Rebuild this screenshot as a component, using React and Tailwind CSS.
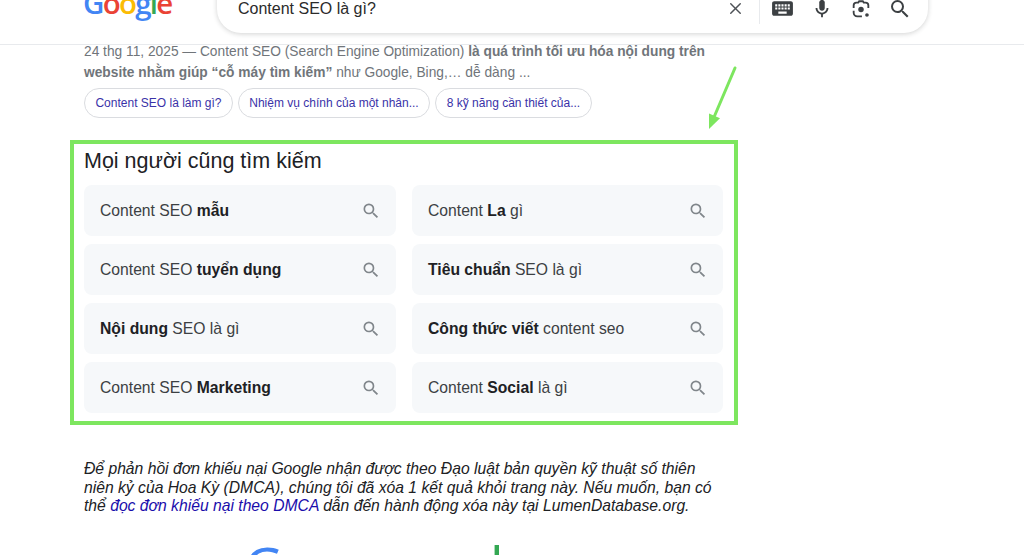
import React from "react";
import { X } from "lucide-react";

const font = "[font-family:'Liberation_Sans',Arial,sans-serif]";

const chips = [
  { label: "Content SEO là làm gì?", width: "w-[149px]" },
  { label: "Nhiệm vụ chính của một nhân...", width: "w-[192px]" },
  { label: "8 kỹ năng cần thiết của...", width: "w-[157px]" },
];

const related = [
  [["Content SEO ", false], ["mẫu", true]],
  [["Content ", false], ["La", true], [" gì", false]],
  [["Content SEO ", false], ["tuyển dụng", true]],
  [["Tiêu chuẩn", true], [" SEO là gì", false]],
  [["Nội dung", true], [" SEO là gì", false]],
  [["Công thức viết", true], [" content seo", false]],
  [["Content SEO ", false], ["Marketing", true]],
  [["Content ", false], ["Social", true], [" là gì", false]],
];

const searchPath =
  "M15.5 14h-.79l-.28-.27A6.471 6.471 0 0 0 16 9.5 6.5 6.5 0 1 0 9.5 16c1.61 0 3.09-.59 4.23-1.57l.27.28v.79l5 4.99L20.49 19l-4.99-5zm-6 0C7.01 14 5 11.99 5 9.5S7.01 5 9.5 5 14 7.01 14 9.5 11.99 14 9.5 14z";

const GoogleWord = ({ className }) => (
  <div className={`font-['Open_Sans',sans-serif] ${className}`}>
    <span className="text-[#4285f4]">G</span>
    <span className="text-[#ea4335]">o</span>
    <span className="text-[#fbbc05]">o</span>
    <span className="text-[#4285f4]">g</span>
    <span className="text-[#34a853]">l</span>
    <span className="text-[#ea4335]">e</span>
  </div>
);

const Header = () => (
  <div className="h-[45px] border-b border-[#e8eaed] flex items-start overflow-hidden">
    <div className="w-[217px] pl-[83px] -mt-[21px]">
      <GoogleWord className="text-[29.5px] leading-[48px] font-semibold tracking-[-0.06em]" />
    </div>
    <div className="w-[711px] h-[49px] -mt-[16px] rounded-b-[24px] bg-white shadow-[0_1px_5px_rgba(32,33,36,0.2)] flex items-center pl-[21px] pr-[16px]">
      <span className="text-[16px] text-[#2b2b2b] flex-1">Content SEO là gì?</span>
      <X className="w-[19px] h-[19px] text-[#4d5156]" strokeWidth={1.8} />
      <div className="w-px h-[33px] bg-[#e8eaed] ml-[14px] mr-[10px] self-start mt-[7px]" />
      {/* keyboard */}
      <svg viewBox="0 0 24 24" className="w-[25px] h-[25px] fill-[#3c4043]">
        <path d="M20 5H4c-1.1 0-1.99.9-1.99 2L2 17c0 1.1.9 2 2 2h16c1.1 0 2-.9 2-2V7c0-1.1-.9-2-2-2zm-9 3h2v2h-2V8zm0 3h2v2h-2v-2zM8 8h2v2H8V8zm0 3h2v2H8v-2zm-1 2H5v-2h2v2zm0-3H5V8h2v2zm9 7H8v-2h8v2zm0-4h-2v-2h2v2zm0-3h-2V8h2v2zm3 3h-2v-2h2v2zm0-3h-2V8h2v2z" />
      </svg>
      {/* mic */}
      <svg viewBox="0 0 24 24" className="w-[22px] h-[22px] ml-[16px] fill-[#3c4043]">
        <path d="M12 14c1.66 0 3-1.34 3-3V5c0-1.66-1.34-3-3-3S9 3.34 9 5v6c0 1.66 1.34 3 3 3z" />
        <path d="M17 11c0 2.76-2.24 5-5 5s-5-2.24-5-5H5c0 3.53 2.61 6.43 6 6.92V21h2v-3.08c3.39-.49 6-3.39 6-6.92h-2z" />
      </svg>
      {/* lens */}
      <svg viewBox="0 0 24 24" className="w-[22px] h-[22px] ml-[17px]" fill="none">
        <path d="M4 11V8a3 3 0 0 1 3-3h2l1-1.5h4L15 5h2a3 3 0 0 1 3 3v3M4 14v2a4 4 0 0 0 4 4h5" stroke="#3c4043" strokeWidth="2" />
        <circle cx="12" cy="12.5" r="3" fill="#3c4043" />
        <circle cx="18.5" cy="18.5" r="2" fill="#3c4043" />
      </svg>
      <svg viewBox="0 0 24 24" className="w-[24px] h-[24px] ml-[16px] fill-[#3c4043]">
        <path d={searchPath} />
      </svg>
    </div>
  </div>
);

export default function App() {
  return (
    <div className={`relative w-[1024px] h-[555px] overflow-hidden bg-white ${font}`}>
      <Header />

      <div className="pl-[84px] -mt-[4px]">
        <p className="w-[640px] text-[13.75px] leading-[21px] text-[#70757a]">
          24 thg 11, 2025 — Content SEO (Search Engine Optimization) <b>là quá trình tối ưu hóa nội dung trên website nhằm giúp “cỗ máy tìm kiếm”</b> như Google, Bing,… dễ dàng ...
        </p>
        <div className="flex gap-[5px] mt-[5px]">
          {chips.map((chip) => (
            <div
              key={chip.label}
              className={`${chip.width} h-[30px] flex items-center justify-center rounded-full border border-[#dadce0] text-[12px] text-[#3a32a8]`}
            >
              {chip.label}
            </div>
          ))}
        </div>
      </div>

      <div className="ml-[70px] mt-[22px] w-[668px] h-[285px] border-[4px] border-[#7de65f] pl-[10px] pt-[2px]">
        <h2 className="text-[21.5px] leading-[30px] text-[#202124]">Mọi người cũng tìm kiếm</h2>
        <div className="grid grid-cols-[312px_311px] gap-x-[16px] gap-y-[8px] mt-[9px]">
          {related.map((parts, i) => (
            <div key={i} className="h-[51px] rounded-lg bg-[#f6f8fa] flex items-center justify-between pl-[16px] pr-[15px]">
              <span className="text-[15.7px] text-[#3c4043]">
                {parts.map(([text, bold], j) => (
                  <span key={j} className={bold ? "font-bold text-[#202124]" : ""}>{text}</span>
                ))}
              </span>
              <svg viewBox="0 0 24 24" className="w-[20px] h-[20px] fill-[#80868b]">
                <path d={searchPath} />
              </svg>
            </div>
          ))}
        </div>
      </div>

      <p className="ml-[84px] mt-[35px] w-[640px] text-[15.7px] leading-[18.5px] italic text-[#202124]">
        Để phản hồi đơn khiếu nại Google nhận được theo Đạo luật bản quyền kỹ thuật số thiên niên kỷ của Hoa Kỳ (DMCA), chúng tôi đã xóa 1 kết quả khỏi trang này. Nếu muốn, bạn có thể{" "}
        <span className="text-[#1a0dab]">đọc đơn khiếu nại theo DMCA</span> dẫn đến hành động xóa này tại LumenDatabase.org.
      </p>

      <div className="ml-[244px] mt-[22px]">
        <GoogleWord className="text-[54px] leading-[56px] font-normal tracking-[0.52em]" />
      </div>

      {/* annotation arrow */}
      <svg className="absolute left-[700px] top-[60px] w-[45px] h-[75px]" viewBox="0 0 45 75" fill="none">
        <path d="M35 8 L14.5 56" stroke="#7de65f" strokeWidth="3" strokeLinecap="round" />
        <path d="M9 69 L20 58.3 L9 53.6 Z" fill="#7de65f" />
      </svg>
    </div>
  );
}
